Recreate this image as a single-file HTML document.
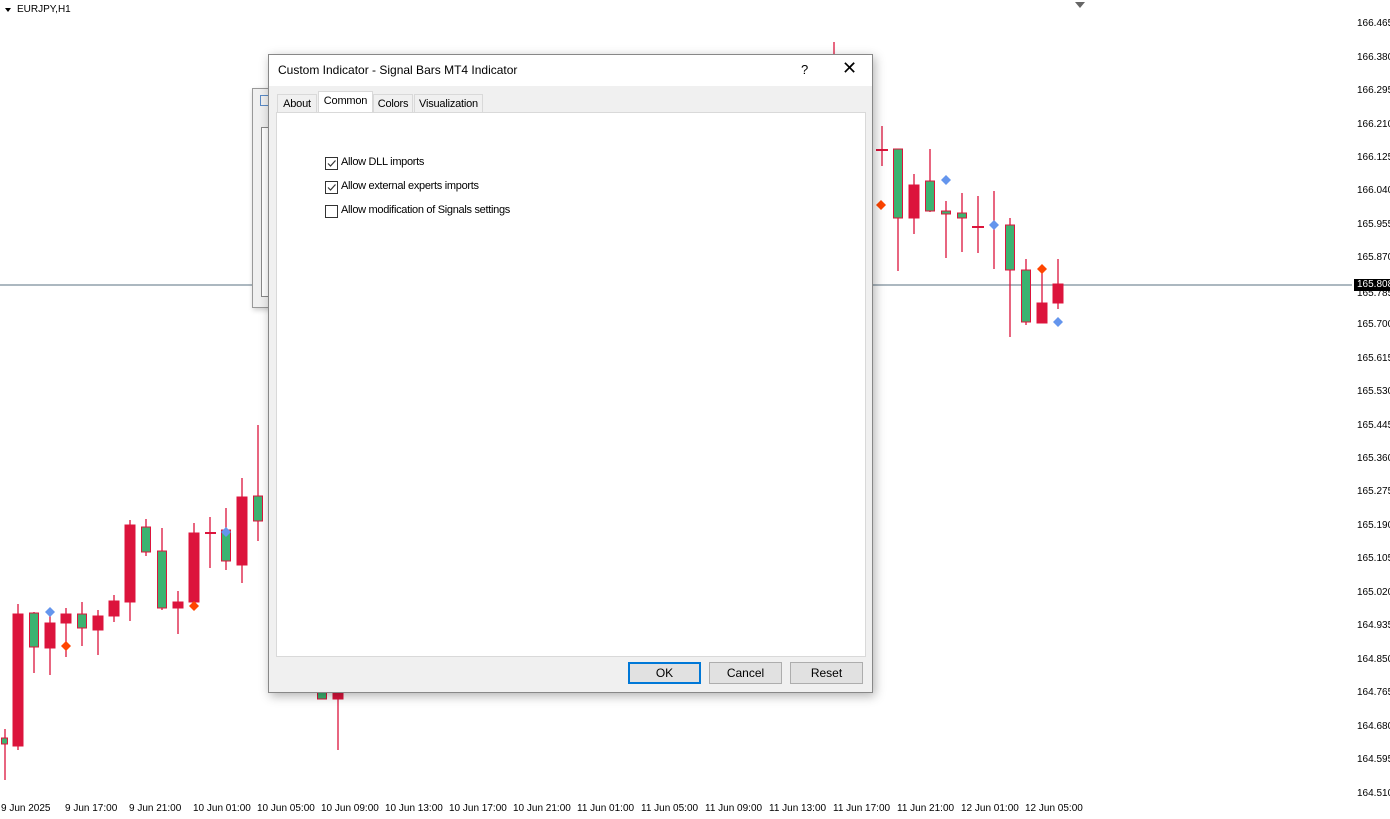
<!DOCTYPE html>
<html><head><style>
body{margin:0;width:1390px;height:819px;position:relative;overflow:hidden;background:#fff;font-family:"Liberation Sans",sans-serif;}
.t{position:absolute;font-size:10px;color:#000;}
.dlg{position:absolute;left:268px;top:54px;width:603px;height:637px;background:#f0f0f0;border:1px solid #888;box-shadow:2px 3px 10px rgba(0,0,0,.3);}
.title{position:absolute;left:0;top:0;width:603px;height:31px;background:#fff;font-size:12px;}
.tab{position:absolute;top:39px;height:18px;border:1px solid #d9d9d9;border-bottom:none;background:#f0f0f0;font-size:11px;line-height:19px;text-align:center;letter-spacing:-0.2px;}
.panel{position:absolute;left:7px;top:57px;width:588px;height:543px;background:#fff;border:1px solid #d9d9d9;}
.cb{position:absolute;left:48px;width:11px;height:11px;border:1px solid #333;background:#fff;}
.lbl{position:absolute;left:64px;font-size:11px;letter-spacing:-0.3px;}
.btn{position:absolute;top:607px;width:71px;height:20px;background:#e1e1e1;border:1px solid #adadad;font-size:12px;text-align:center;line-height:20px;}
</style></head><body>
<svg width="1390" height="819" style="position:absolute;left:0;top:0">
<line x1="0" y1="285" x2="1352" y2="285" stroke="#5a7080"/>
<polygon points="1075,2 1085,2 1080,8" fill="#666"/>
<polygon points="5,8 11,8 8,12" fill="#000"/>
<g stroke="#dc143c" stroke-width="1.3">
<line x1="5" y1="729" x2="5" y2="780"/><line x1="18" y1="604" x2="18" y2="750"/><line x1="34" y1="612" x2="34" y2="673"/><line x1="50" y1="612" x2="50" y2="675"/><line x1="66" y1="608" x2="66" y2="657"/><line x1="82" y1="602" x2="82" y2="646"/><line x1="98" y1="610" x2="98" y2="655"/><line x1="114" y1="595" x2="114" y2="622"/><line x1="130" y1="520" x2="130" y2="621"/><line x1="146" y1="519" x2="146" y2="556"/><line x1="162" y1="528" x2="162" y2="610"/><line x1="178" y1="591" x2="178" y2="634"/><line x1="194" y1="523" x2="194" y2="602"/><line x1="210" y1="517" x2="210" y2="568"/><line x1="226" y1="508" x2="226" y2="570"/><line x1="242" y1="478" x2="242" y2="583"/><line x1="258" y1="425" x2="258" y2="541"/><line x1="338" y1="692" x2="338" y2="750"/><line x1="834" y1="42" x2="834" y2="54"/>
<line x1="882" y1="126" x2="882" y2="166"/><line x1="898" y1="149" x2="898" y2="271"/><line x1="914" y1="174" x2="914" y2="234"/><line x1="930" y1="149" x2="930" y2="212"/><line x1="946" y1="201" x2="946" y2="258"/><line x1="962" y1="193" x2="962" y2="252"/><line x1="978" y1="196" x2="978" y2="253"/><line x1="994" y1="191" x2="994" y2="269"/><line x1="1010" y1="218" x2="1010" y2="337"/><line x1="1026" y1="259" x2="1026" y2="325"/><line x1="1042" y1="270" x2="1042" y2="323"/><line x1="1058" y1="259" x2="1058" y2="309"/>
<line x1="205" y1="533" x2="216" y2="533" stroke-width="2"/><line x1="876" y1="150" x2="888" y2="150" stroke-width="2"/><line x1="972" y1="227" x2="984" y2="227" stroke-width="2"/>
</g>
<g stroke="#dc143c" stroke-width="1">
<rect x="1.5" y="738" width="6" height="6" fill="#3cb371"/><rect x="13" y="614" width="10" height="132" fill="#dc143c"/><rect x="29.5" y="613" width="9" height="34" fill="#3cb371"/><rect x="45" y="623" width="10" height="25" fill="#dc143c"/><rect x="61" y="614" width="10" height="9" fill="#dc143c"/><rect x="77.5" y="614" width="9" height="14" fill="#3cb371"/><rect x="93" y="616" width="10" height="14" fill="#dc143c"/><rect x="109" y="601" width="10" height="15" fill="#dc143c"/><rect x="125" y="525" width="10" height="77" fill="#dc143c"/><rect x="141.5" y="527" width="9" height="25" fill="#3cb371"/><rect x="157.5" y="551" width="9" height="57" fill="#3cb371"/><rect x="173" y="602" width="10" height="6" fill="#dc143c"/><rect x="189" y="533" width="10" height="69" fill="#dc143c"/><rect x="221.5" y="530" width="9" height="31" fill="#3cb371"/><rect x="237" y="497" width="10" height="68" fill="#dc143c"/><rect x="253.5" y="496" width="9" height="25" fill="#3cb371"/>
<rect x="317.5" y="692" width="9" height="7" fill="#3cb371"/><rect x="333" y="692" width="10" height="7" fill="#dc143c"/>
<rect x="893.5" y="149" width="9" height="69" fill="#3cb371"/><rect x="909" y="185" width="10" height="33" fill="#dc143c"/><rect x="925.5" y="181" width="9" height="30" fill="#3cb371"/><rect x="941.5" y="211" width="9" height="3" fill="#3cb371"/><rect x="957.5" y="213" width="9" height="5" fill="#3cb371"/><rect x="1005.5" y="225" width="9" height="45" fill="#3cb371"/><rect x="1021.5" y="270" width="9" height="52" fill="#3cb371"/><rect x="1037" y="303" width="10" height="20" fill="#dc143c"/><rect x="1053" y="284" width="10" height="19" fill="#dc143c"/>
</g>
<g fill="#6495ed"><path d="M50 607l5 5-5 5-5-5z"/><path d="M226 527l5 5-5 5-5-5z"/><path d="M946 175l5 5-5 5-5-5z"/><path d="M994 220l5 5-5 5-5-5z"/><path d="M1058 317l5 5-5 5-5-5z"/></g>
<g fill="#ff4500"><path d="M66 641l5 5-5 5-5-5z"/><path d="M194 601l5 5-5 5-5-5z"/><path d="M881 200l5 5-5 5-5-5z"/><path d="M1042 264l5 5-5 5-5-5z"/></g>
<rect x="1354" y="279" width="36" height="12" fill="#000"/>
</svg>
<div class="t" style="left:17px;top:4px;">EURJPY,H1</div>
<div style="position:absolute;left:0;top:-2px">
<div class="t" style="left:1357px;top:20px">166.465</div><div class="t" style="left:1357px;top:54px">166.380</div><div class="t" style="left:1357px;top:87px">166.295</div><div class="t" style="left:1357px;top:121px">166.210</div><div class="t" style="left:1357px;top:154px">166.125</div><div class="t" style="left:1357px;top:187px">166.040</div><div class="t" style="left:1357px;top:221px">165.955</div><div class="t" style="left:1357px;top:254px">165.870</div><div class="t" style="left:1357px;top:281px;color:#fff">165.808</div><div class="t" style="left:1357px;top:290px">165.785</div><div class="t" style="left:1357px;top:321px">165.700</div><div class="t" style="left:1357px;top:355px">165.615</div><div class="t" style="left:1357px;top:388px">165.530</div><div class="t" style="left:1357px;top:422px">165.445</div><div class="t" style="left:1357px;top:455px">165.360</div><div class="t" style="left:1357px;top:488px">165.275</div><div class="t" style="left:1357px;top:522px">165.190</div><div class="t" style="left:1357px;top:555px">165.105</div><div class="t" style="left:1357px;top:589px">165.020</div><div class="t" style="left:1357px;top:622px">164.935</div><div class="t" style="left:1357px;top:656px">164.850</div><div class="t" style="left:1357px;top:689px">164.765</div><div class="t" style="left:1357px;top:723px">164.680</div><div class="t" style="left:1357px;top:756px">164.595</div><div class="t" style="left:1357px;top:790px">164.510</div>
</div>
<div class="t" style="left:1px;top:803px">9 Jun 2025</div><div class="t" style="left:65px;top:803px">9 Jun 17:00</div><div class="t" style="left:129px;top:803px">9 Jun 21:00</div><div class="t" style="left:193px;top:803px">10 Jun 01:00</div><div class="t" style="left:257px;top:803px">10 Jun 05:00</div><div class="t" style="left:321px;top:803px">10 Jun 09:00</div><div class="t" style="left:385px;top:803px">10 Jun 13:00</div><div class="t" style="left:449px;top:803px">10 Jun 17:00</div><div class="t" style="left:513px;top:803px">10 Jun 21:00</div><div class="t" style="left:577px;top:803px">11 Jun 01:00</div><div class="t" style="left:641px;top:803px">11 Jun 05:00</div><div class="t" style="left:705px;top:803px">11 Jun 09:00</div><div class="t" style="left:769px;top:803px">11 Jun 13:00</div><div class="t" style="left:833px;top:803px">11 Jun 17:00</div><div class="t" style="left:897px;top:803px">11 Jun 21:00</div><div class="t" style="left:961px;top:803px">12 Jun 01:00</div><div class="t" style="left:1025px;top:803px">12 Jun 05:00</div>
<div style="position:absolute;left:252px;top:88px;width:30px;height:218px;background:#f0f0f0;border:1px solid #999;box-shadow:1px 2px 5px rgba(0,0,0,.2)"><div style="position:absolute;left:8px;top:38px;width:20px;height:168px;border:1px solid #888;background:#fff"></div><div style="position:absolute;left:7px;top:6px;width:8px;height:9px;border:1px solid #5a8ac6"></div></div>
<div class="dlg">
<div class="title"><span style="position:absolute;left:9px;top:8px">Custom Indicator - Signal Bars MT4 Indicator</span><span style="position:absolute;left:532px;top:7px;font-size:13px">?</span><span style="position:absolute;left:573px;top:3px;font-size:18px">✕</span></div>
<div class="tab" style="left:8px;width:38px">About</div>
<div class="tab" style="left:49px;top:36px;height:21px;width:53px;background:#fff">Common</div>
<div class="tab" style="left:104px;width:38px">Colors</div>
<div class="tab" style="left:145px;width:67px">Visualization</div>
<div class="panel">
<div class="cb" style="top:44px"><svg width="11" height="11" style="position:absolute"><path d="M2 5.5l2.5 2.5 5-5.5" stroke="#333" fill="none" stroke-width="1.2"/></svg></div><div class="lbl" style="top:43px">Allow DLL imports</div>
<div class="cb" style="top:68px"><svg width="11" height="11" style="position:absolute"><path d="M2 5.5l2.5 2.5 5-5.5" stroke="#333" fill="none" stroke-width="1.2"/></svg></div><div class="lbl" style="top:67px">Allow external experts imports</div>
<div class="cb" style="top:92px"></div><div class="lbl" style="top:91px">Allow modification of Signals settings</div>
</div>
<div class="btn" style="left:359px;border:2px solid #0078d7;width:69px;height:18px;line-height:18px">OK</div>
<div class="btn" style="left:440px">Cancel</div>
<div class="btn" style="left:521px">Reset</div>
</div>
</body></html>
